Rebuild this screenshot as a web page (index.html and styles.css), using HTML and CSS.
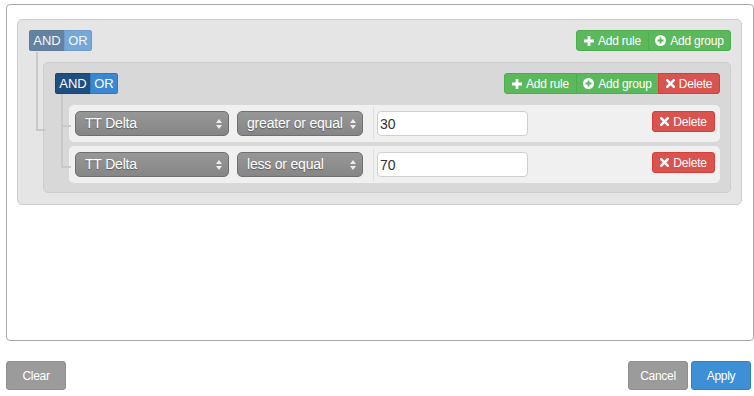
FILE: index.html
```html
<!DOCTYPE html>
<html lang="en">
<head>
    <meta charset="UTF-8">
    <title>Query Builder</title>
    <link rel="stylesheet" href="styles.css">
</head>
<body>
    <div class="builder">
        <div class="group group-outer">
            <div class="group-header">
                <div class="conditions faded">
                    <span class="cond cond-and">AND</span><span class="cond cond-or">OR</span>
                </div>
                <div class="actions">
                    <button class="btn btn-green">
                        <svg width="10" height="10" viewBox="0 0 10 10"><path d="M3.6 0h2.8v3.6H10v2.8H6.4V10H3.6V6.4H0V3.6h3.6z" fill="#fff"/></svg>
                        <span>Add rule</span>
                    </button><button class="btn btn-green">
                        <svg width="11" height="11" viewBox="0 0 11 11"><circle cx="5.5" cy="5.5" r="5.5" fill="#fff"/><path d="M4.6 2.5h1.8v2.1h2.1v1.8H6.4v2.1H4.6V6.4H2.5V4.6h2.1z" fill="#5cb85c"/></svg>
                        <span>Add group</span>
                    </button>
                </div>
            </div>
            <ul class="rules-list">
                <li class="group group-inner">
                    <div class="group-header">
                        <div class="conditions">
                            <span class="cond cond-and">AND</span><span class="cond cond-or">OR</span>
                        </div>
                        <div class="actions">
                            <button class="btn btn-green">
                                <svg width="10" height="10" viewBox="0 0 10 10"><path d="M3.6 0h2.8v3.6H10v2.8H6.4V10H3.6V6.4H0V3.6h3.6z" fill="#fff"/></svg>
                                <span>Add rule</span>
                            </button><button class="btn btn-green">
                                <svg width="11" height="11" viewBox="0 0 11 11"><circle cx="5.5" cy="5.5" r="5.5" fill="#fff"/><path d="M4.6 2.5h1.8v2.1h2.1v1.8H6.4v2.1H4.6V6.4H2.5V4.6h2.1z" fill="#5cb85c"/></svg>
                                <span>Add group</span>
                            </button><button class="btn btn-red">
                                <svg width="9" height="9" viewBox="0 0 9 9"><path d="M1.3 1.3l6.4 6.4M7.7 1.3L1.3 7.7" stroke="#fff" stroke-width="2.6" stroke-linecap="square"/></svg>
                                <span>Delete</span>
                            </button>
                        </div>
                    </div>
                    <ul class="rules-list">
                        <li class="rule">
                            <div class="select select-field">TT Delta
                                <svg class="arrows" width="6" height="10" viewBox="0 0 6 10"><path d="M0 4L3 0l3 4zM0 6l3 4 3-4z" fill="#eee"/></svg>
                            </div>
                            <div class="select select-op">greater or equal
                                <svg class="arrows" width="6" height="10" viewBox="0 0 6 10"><path d="M0 4L3 0l3 4zM0 6l3 4 3-4z" fill="#eee"/></svg>
                            </div>
                            <div class="value-box">
                                <input class="value" type="text" value="30">
                            </div>
                            <button class="btn btn-red btn-rule-del">
                                <svg width="9" height="9" viewBox="0 0 9 9"><path d="M1.3 1.3l6.4 6.4M7.7 1.3L1.3 7.7" stroke="#fff" stroke-width="2.6" stroke-linecap="square"/></svg>
                                <span>Delete</span>
                            </button>
                        </li>
                        <li class="rule">
                            <div class="select select-field">TT Delta
                                <svg class="arrows" width="6" height="10" viewBox="0 0 6 10"><path d="M0 4L3 0l3 4zM0 6l3 4 3-4z" fill="#eee"/></svg>
                            </div>
                            <div class="select select-op">less or equal
                                <svg class="arrows" width="6" height="10" viewBox="0 0 6 10"><path d="M0 4L3 0l3 4zM0 6l3 4 3-4z" fill="#eee"/></svg>
                            </div>
                            <div class="value-box">
                                <input class="value" type="text" value="70">
                            </div>
                            <button class="btn btn-red btn-rule-del">
                                <svg width="9" height="9" viewBox="0 0 9 9"><path d="M1.3 1.3l6.4 6.4M7.7 1.3L1.3 7.7" stroke="#fff" stroke-width="2.6" stroke-linecap="square"/></svg>
                                <span>Delete</span>
                            </button>
                        </li>
                    </ul>
                </li>
            </ul>
        </div>
    </div>
    <div class="footer">
        <button class="fbtn fbtn-gray">Clear</button>
        <div class="footer-right">
            <button class="fbtn fbtn-gray">Cancel</button>
            <button class="fbtn fbtn-blue">Apply</button>
        </div>
    </div>
</body>
</html>
```

FILE: styles.css
```css
* {
    margin: 0; padding: 0;
    box-sizing: border-box;
}
body {
    background: #fff;
    color: #333;
    font-family: "Liberation Sans", Arial, sans-serif;
}
.builder {
    margin: 4px 0 0 6px;
    height: 337px;
    border: 1px solid #a8a8a8;
    border-radius: 4px;
    padding: 14px 11px 0 10px;
}

/* groups */
.group {
    border: 1px solid #cdcdcd;
    border-radius: 5px;
    padding: 10px 10px 11px 11px;
}
.group-outer {
    background: #e5e5e5;
}
.group-inner {
    background: #d8d8d8;
    padding-bottom: 9px;
}
.group-header {
    display: flex;
    justify-content: space-between;
    height: 21px;
}
.conditions {
    display: flex;
    border-radius: 3px;
    overflow: hidden;
}
.conditions.faded {
    opacity: .65;
}
.cond {
    height: 21px;
    font-size: 13px;
    color: #fff;
    text-align: center;
}
.cond-and {
    width: 35px;
    background: #1f4e80;
    border: 1px solid #1a4270;
    border-right: 0;
    line-height: 19px;
}
.cond-or {
    width: 28px;
    background: #3a88d1;
    border: 1px solid #2f78bd;
    line-height: 19px;
}
.actions {
    display: flex;
}
.btn {
    display: inline-flex;
    align-items: center;
    justify-content: center;
    gap: 4px;
    height: 21px;
    padding: 0 2px;
    font-family: inherit;
    font-size: 12px;
    letter-spacing: -.2px;
    white-space: nowrap;
    color: #fff;
    border: 1px solid;
    cursor: pointer;
}
.actions .btn:first-child { border-radius: 3px 0 0 3px; }
.actions .btn:last-child { border-radius: 0 3px 3px 0; }
.actions .btn + .btn { margin-left: -1px; }
.btn-green {
    background: #5cb85c;
    border-color: #4cae4c;
}
.btn-red {
    background: #d9534f;
    border-color: #d43f3a;
}
.actions .btn:nth-child(1) { width: 73px; }
.actions .btn:nth-child(2) { width: 83px; }
.actions .btn:nth-child(3) { width: 62px; }

/* tree lines */
.rules-list {
    list-style: none;
    margin-top: 11px;
    padding-left: 14px;
}
.rules-list > li {
    position: relative;
}
.rules-list > li + li {
    margin-top: 4px;
}
.rules-list > li::before,
.rules-list > li::after {
    content: "";
    position: absolute;
    left: -8px;
    width: 8px;
    border: 0 solid #c9c9c9;
}
.rules-list > li::before {
    top: -4px;
    height: calc(50% + 5px);
    border-width: 0 0 2px 2px;
}
.rules-list > li:first-child::before {
    top: -11px;
    height: calc(50% + 12px);
}
.rules-list > li::after {
    top: 50%;
    height: calc(50% + 4px);
    border-width: 0 0 0 2px;
}
.rules-list > li:last-child::after {
    display: none;
}

/* rules */
.rule {
    display: flex;
    align-items: flex-start;
    background: #f0f0f0;
    border-radius: 5px;
    padding: 6px 5px 6px 6px;
    height: 37px;
}
.select {
    position: relative;
    height: 25px;
    line-height: 23px;
    padding-left: 9px;
    font-size: 14px;
    letter-spacing: -.2px;
    color: #fff;
    text-shadow: 0 1px 1px rgba(0,0,0,.35);
    background: linear-gradient(#979797, #868686);
    border: 1px solid #6f6f6f;
    border-radius: 5px;
    white-space: nowrap;
}
.select .arrows {
    position: absolute;
    right: 6px;
    top: 7px;
}
.select-field { width: 154px; }
.select-op {
    width: 126px;
    margin-left: 8px;
}
.value-box {
    margin: -3px 0 0 10px;
    padding: 3px 0 3px 3px;
    border-left: 1px solid #dcdcdc;
}
.value {
    display: block;
    width: 151px;
    height: 25px;
    padding: 0 2px;
    border: 1px solid #cfcfcf;
    border-radius: 4px;
    background: #fff;
    font-family: inherit;
    font-size: 14px;
    color: #333;
    outline: none;
}
.rule .btn-rule-del {
    margin-left: auto;
    width: 63px;
    border-radius: 3px;
}

/* footer */
.footer {
    display: flex;
    justify-content: space-between;
    margin: 20px 3px 0 6px;
}
.footer-right {
    display: flex;
    gap: 3px;
}
.fbtn {
    width: 60px;
    height: 29px;
    border: 1px solid;
    border-radius: 3px;
    color: #fff;
    font-family: "Liberation Sans Narrow", "Liberation Sans", Arial, sans-serif;
    font-size: 12px;
    letter-spacing: -.3px;
}
.fbtn-gray {
    background: #9b9b9b;
    border-color: #8e8e8e;
}
.fbtn-blue {
    background: #3d8fd6;
    border-color: #337fc2;
}
```
